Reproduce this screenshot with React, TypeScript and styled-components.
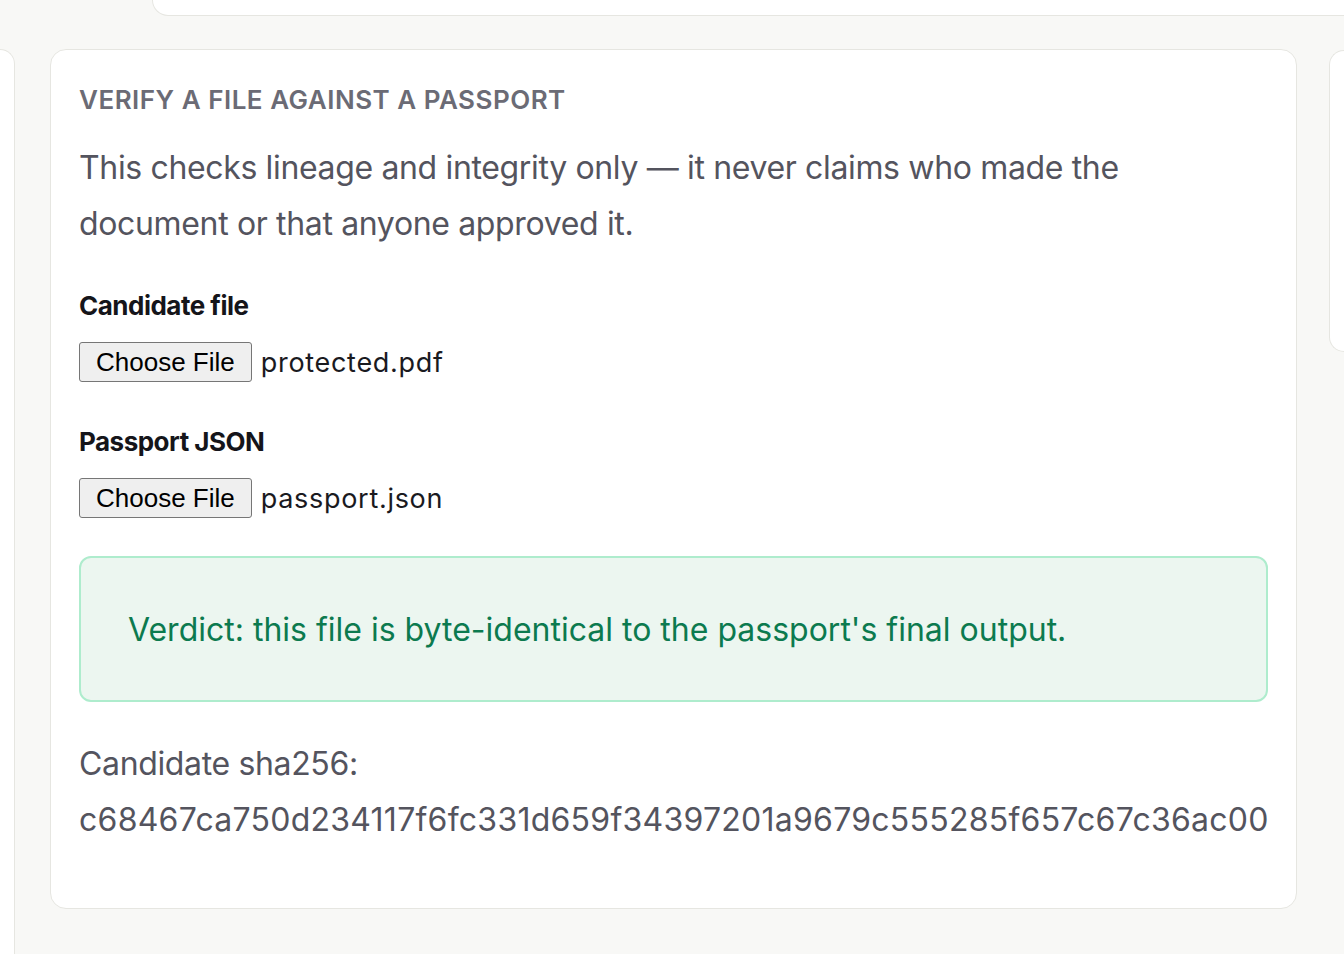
import React from 'react';
import styled, { createGlobalStyle } from 'styled-components';

const GlobalStyle = createGlobalStyle`
  html, body {
    margin: 0;
    padding: 0;
    background: #f8f8f6;
    overflow: hidden;
  }
  body {
    font-family: Inter, "Noto Sans", sans-serif;
    -webkit-font-smoothing: antialiased;
  }
`;

const Page = styled.div`
  width: 1344px;
  height: 954px;
  display: flex;
  flex-direction: column;
  gap: 33px;
  overflow: hidden;
`;

const TopStrip = styled.div`
  flex-shrink: 0;
  height: 16px;
  padding-left: 152px;
  display: flex;
`;

const TopCard = styled.div`
  flex: 1;
  margin-right: -40px;
  background: #fff;
  border: 1px solid #e6e6e1;
  border-top: none;
  border-radius: 0 0 0 16px;
`;

const Columns = styled.div`
  display: grid;
  grid-template-columns: 15px 1247px 1fr;
  column-gap: 35px;
  align-items: start;
  flex: 1;
  min-height: 0;
  overflow: hidden;
`;

const SidePanel = styled.div<{ $side: 'left' | 'right' }>`
  background: #fff;
  border: 1px solid #e6e6e1;
  height: ${({ $side }) => ($side === 'left' ? '920px' : '300px')};
  ${({ $side }) =>
    $side === 'left'
      ? 'border-left: none; border-bottom: none; border-radius: 0 16px 0 0;'
      : 'border-right: none; border-radius: 16px 0 0 16px; margin-left: -3px; margin-top: 1px;'}
`;

const Card = styled.section`
  box-sizing: border-box;
  height: 860px;
  background: #fff;
  border: 1px solid #e6e6e1;
  border-radius: 16px;
  padding: 30px 28px;
  display: flex;
  flex-direction: column;
`;

const Heading = styled.h2`
  margin: 0;
  font-size: 26px;
  line-height: 40px;
  font-weight: 600;
  letter-spacing: 0.5px;
  text-transform: uppercase;
  color: #6b6b75;
`;

const Lead = styled.p`
  margin: 20px 0 0;
  font-size: 32px;
  line-height: 56px;
  letter-spacing: -0.35px;
  color: #54545e;
`;

const Field = styled.div`
  display: flex;
  flex-direction: column;
  gap: 20px;
  margin-top: 38px;

  & + & {
    margin-top: 44px;
  }
`;

const Label = styled.label`
  font-size: 26px;
  line-height: 32px;
  font-weight: 700;
  letter-spacing: -0.5px;
  color: #15151a;
`;

const FileRow = styled.div`
  display: flex;
  align-items: center;
  gap: 9px;
`;

const FileButton = styled.button`
  box-sizing: border-box;
  height: 40px;
  padding: 0 16px;
  background: #efefef;
  border: 1px solid #767676;
  border-radius: 3px;
  font-family: "Liberation Sans", Arial, sans-serif;
  font-size: 26px;
  color: #000;
`;

const FileName = styled.span`
  font-size: 27px;
  letter-spacing: 0.7px;
  color: #1a1a1f;
`;

const Verdict = styled.div`
  box-sizing: border-box;
  margin-top: 38px;
  height: 146px;
  display: flex;
  align-items: center;
  padding: 0 47px;
  background: #ecf6f0;
  border: 2px solid #aeeccd;
  border-radius: 12px;
  font-size: 32px;
  letter-spacing: 0;
  color: #0c7a4f;
`;

const Digest = styled.p`
  margin: 34px 0 0;
  font-size: 32px;
  line-height: 56px;
  letter-spacing: -0.35px;
  color: #54545e;
`;

const Hash = styled.span`
  display: block;
  letter-spacing: 0.25px;
`;

export default function App() {
  return (
    <>
      <GlobalStyle />
      <Page>
        <TopStrip>
          <TopCard />
        </TopStrip>
        <Columns>
          <SidePanel $side="left" />
          <Card>
            <Heading>Verify a file against a passport</Heading>
            <Lead>
              This checks lineage and integrity only — it never claims who made the document or
              that anyone approved it.
            </Lead>
            <Field>
              <Label htmlFor="candidate">Candidate file</Label>
              <FileRow>
                <FileButton id="candidate" type="button">Choose File</FileButton>
                <FileName>protected.pdf</FileName>
              </FileRow>
            </Field>
            <Field>
              <Label htmlFor="passport">Passport JSON</Label>
              <FileRow>
                <FileButton id="passport" type="button">Choose File</FileButton>
                <FileName>passport.json</FileName>
              </FileRow>
            </Field>
            <Verdict>Verdict: this file is byte-identical to the passport's final output.</Verdict>
            <Digest>
              Candidate sha256:
              <Hash>c68467ca750d234117f6fc331d659f34397201a9679c555285f657c67c36ac00</Hash>
            </Digest>
          </Card>
          <SidePanel $side="right" />
        </Columns>
      </Page>
    </>
  );
}
